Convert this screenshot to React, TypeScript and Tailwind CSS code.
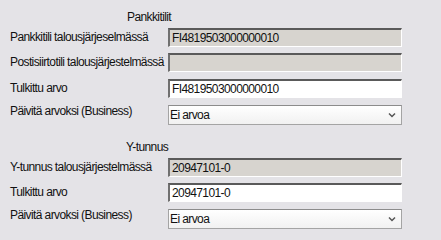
import React from "react";

function ReadBox({ value, white }: { value?: string; white?: boolean }) {
  return (
    <div
      className={`w-[234px] h-[19px] flex items-center pl-[2px] border-t-2 border-l-2 border-b border-r border-t-[#5a5a5a] border-l-[#707070] border-b-white border-r-white ${
        white ? "bg-white" : "bg-[#d7d4cf]"
      }`}
    >
      <span className="leading-[15px]">{value}</span>
    </div>
  );
}

function SelectBox() {
  return (
    <div className="w-[234px] h-[20px] flex items-center justify-between pl-[1px] pr-[5px] border border-[#a4a4a4] border-t-[#8c8c8c] bg-gradient-to-b from-white to-[#f1f1f1]">
      <span className="leading-[15px]">Ei arvoa</span>
      <svg width="8" height="6" viewBox="0 0 8 6">
        <polyline points="1,1.5 4,4.5 7,1.5" fill="none" stroke="#555555" strokeWidth="1.5" />
      </svg>
    </div>
  );
}

function Row({ label, children, select, className }: { label: string; children: React.ReactNode; select?: boolean; className?: string }) {
  return (
    <div className={`flex ${select ? "items-start" : "items-center"} ${className ?? ""}`}>
      <div className={`w-[158px] ${select ? "leading-[12px]" : "leading-[19px]"}`}>{label}</div>
      {children}
    </div>
  );
}

export default function App() {
  return (
    <div className="w-[441px] h-[240px] overflow-hidden bg-[#e4e3e7] font-['Liberation_Sans',Arial,sans-serif] text-[12px] tracking-[-0.6px] text-[#111] pl-[10px] pt-[8px]">
      <div className="ml-[117px] h-[19px] leading-[19px]">Pankkitilit</div>
      <Row label="Pankkitili talousjärjeselmässä" className="mt-[1px]">
        <ReadBox value="FI4819503000000010" />
      </Row>
      <Row label="Postisiirtotili talousjärjestelmässä" className="mt-[6px]">
        <ReadBox />
      </Row>
      <Row label="Tulkittu arvo" className="mt-[7px]">
        <ReadBox value="FI4819503000000010" white />
      </Row>
      <Row label="Päivitä arvoksi (Business)" select className="mt-[7px]">
        <SelectBox />
      </Row>

      <div className="ml-[116px] mt-[13px] h-[19px] leading-[19px]">Y-tunnus</div>
      <Row label="Y-tunnus talousjärjestelmässä" className="mt-[1px]">
        <ReadBox value="20947101-0" />
      </Row>
      <Row label="Tulkittu arvo" className="mt-[6px]">
        <ReadBox value="20947101-0" white />
      </Row>
      <Row label="Päivitä arvoksi (Business)" select className="mt-[7px]">
        <SelectBox />
      </Row>
    </div>
  );
}
